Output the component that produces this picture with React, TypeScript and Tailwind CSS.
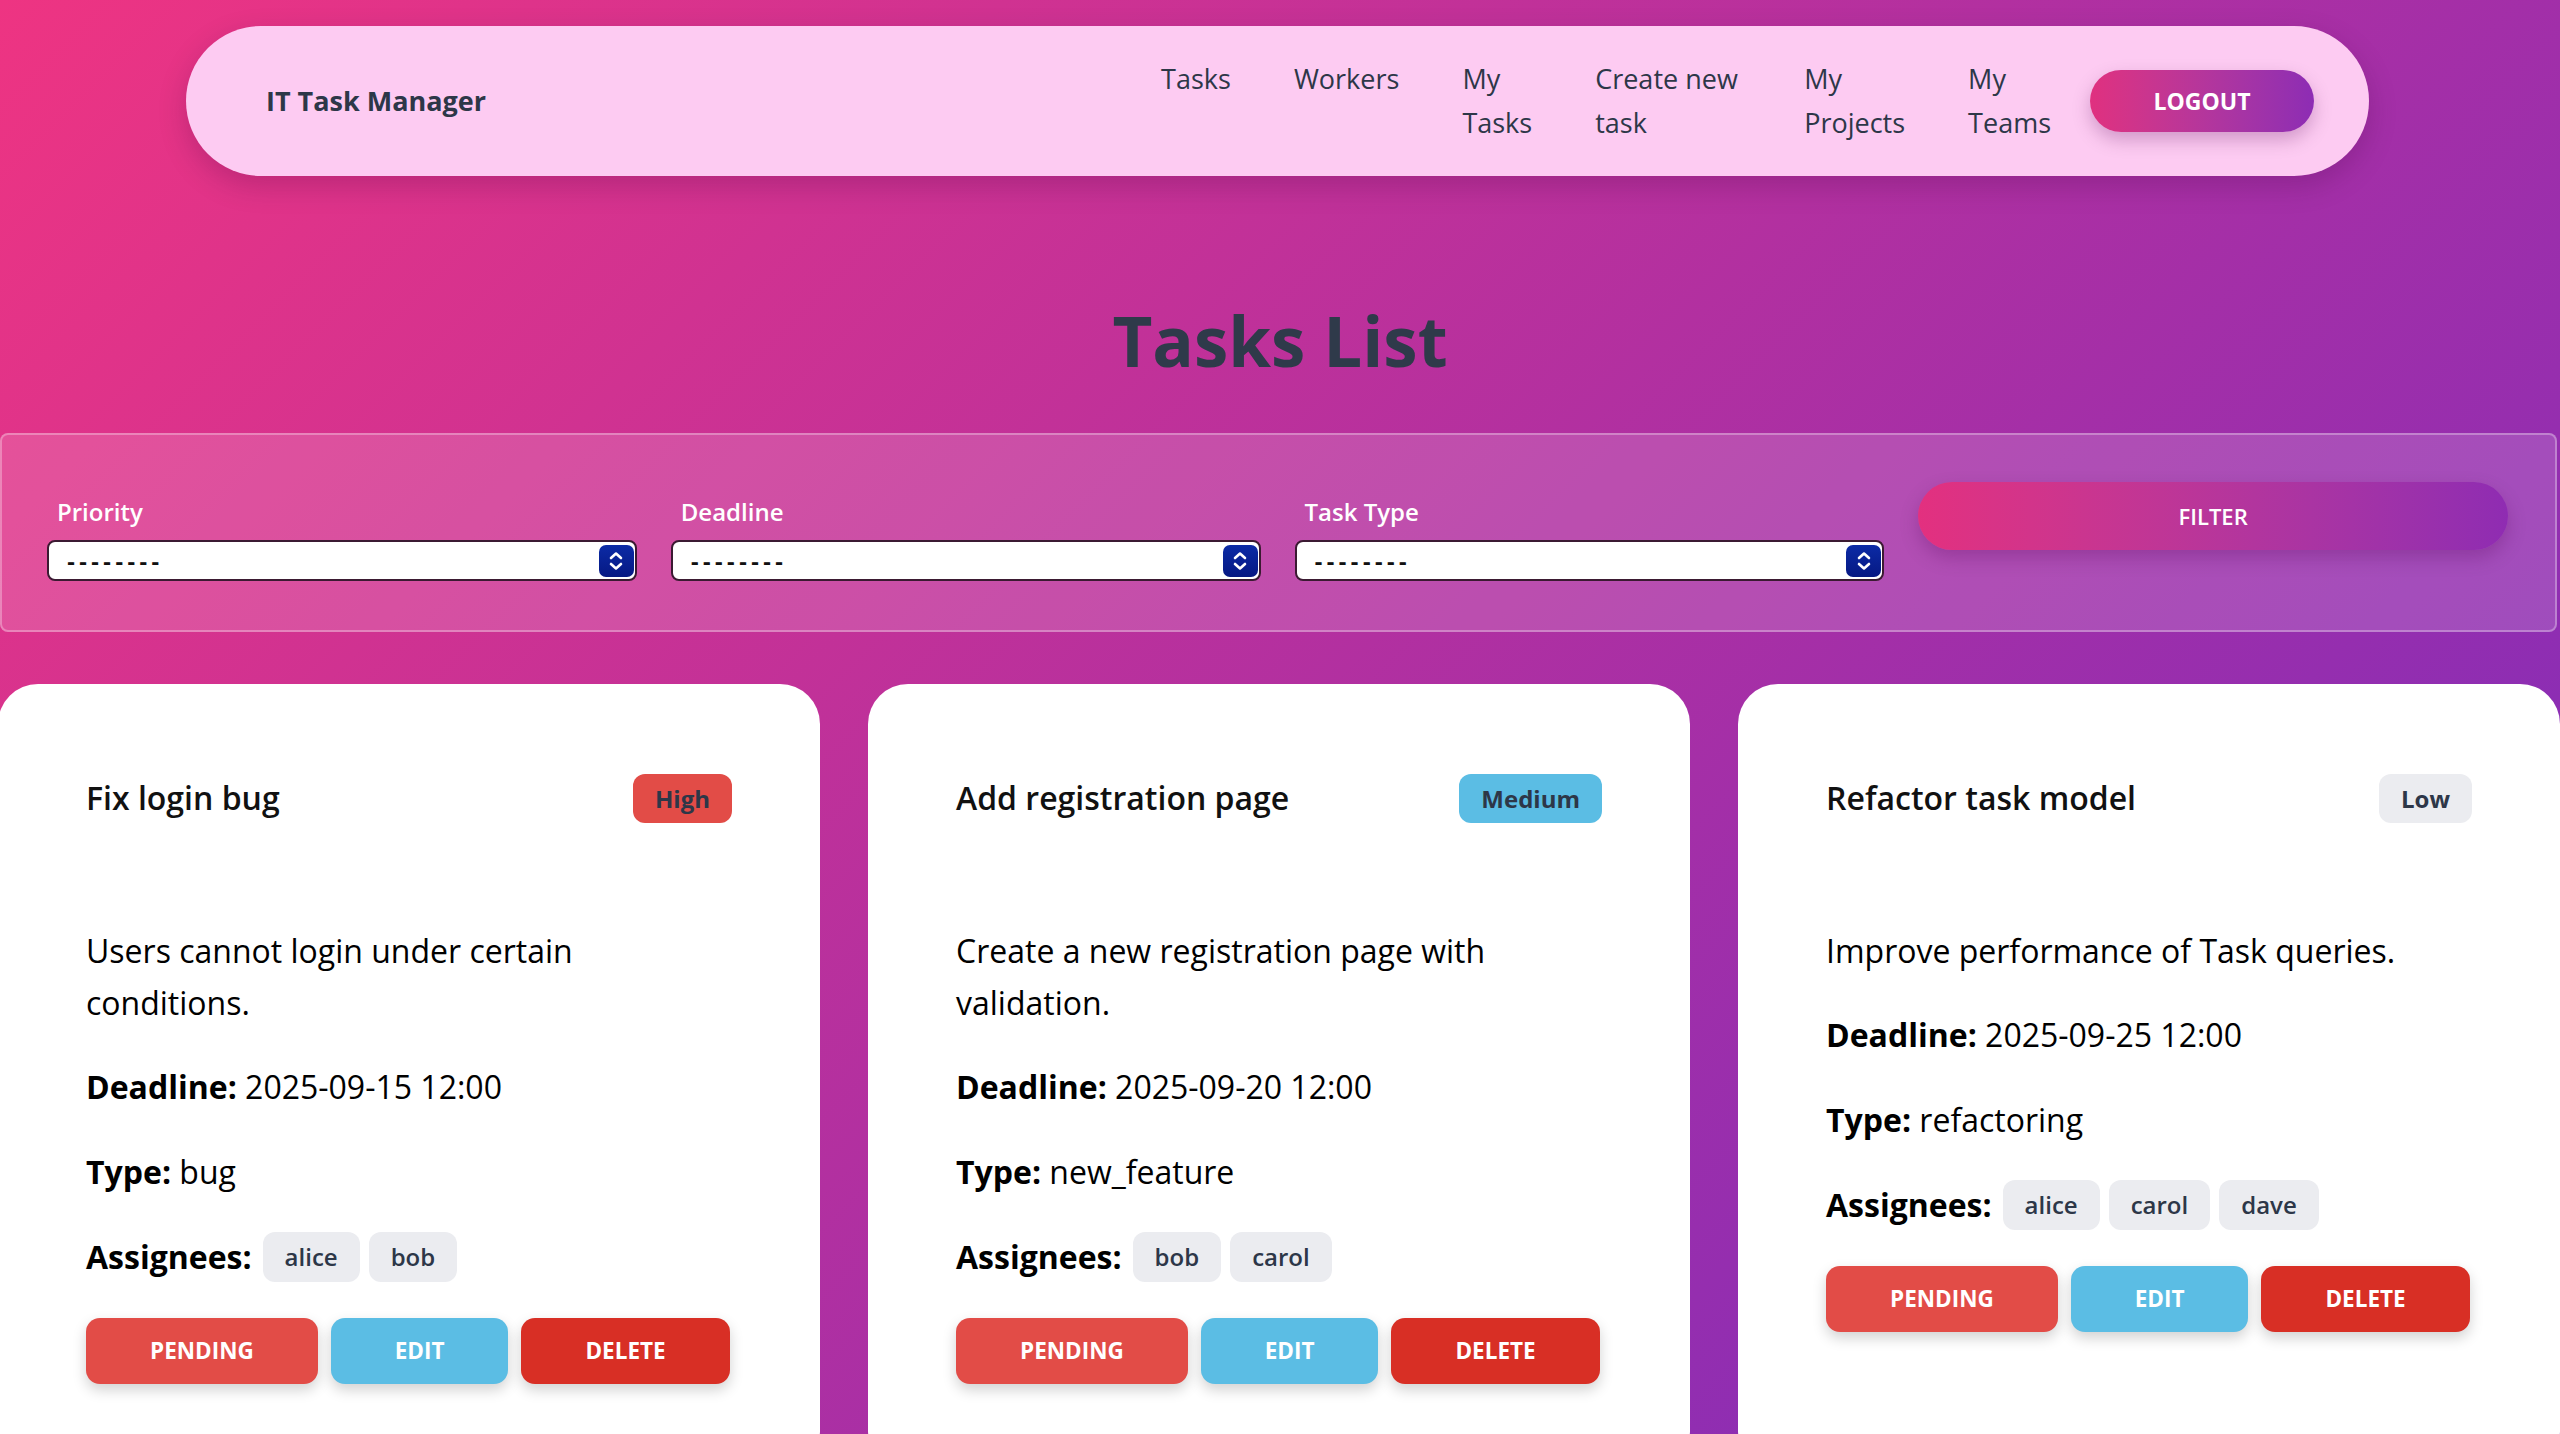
import React from 'react';

type Task = {
  id: number;
  title: string;
  priority: 'High' | 'Medium' | 'Low';
  description: string;
  deadline: string;
  type: string;
  assignees: string[];
};

const tasks: Task[] = [
  {
    id: 1,
    title: 'Fix login bug',
    priority: 'High',
    description: 'Users cannot login under certain conditions.',
    deadline: '2025-09-15 12:00',
    type: 'bug',
    assignees: ['alice', 'bob'],
  },
  {
    id: 2,
    title: 'Add registration page',
    priority: 'Medium',
    description: 'Create a new registration page with validation.',
    deadline: '2025-09-20 12:00',
    type: 'new_feature',
    assignees: ['bob', 'carol'],
  },
  {
    id: 3,
    title: 'Refactor task model',
    priority: 'Low',
    description: 'Improve performance of Task queries.',
    deadline: '2025-09-25 12:00',
    type: 'refactoring',
    assignees: ['alice', 'carol', 'dave'],
  },
];

const priorityClass: Record<Task['priority'], string> = {
  High: 'bg-[#e24c47]',
  Medium: 'bg-[#5bbde4]',
  Low: 'bg-[#ebecf0]',
};

const navLinks = [
  { label: 'Tasks', cls: '' },
  { label: 'Workers', cls: '' },
  { label: 'My Tasks', cls: 'w-min' },
  { label: 'Create new task', cls: 'w-[146px]' },
  { label: 'My Projects', cls: 'w-min' },
  { label: 'My Teams', cls: 'w-min' },
];

const Stepper: React.FC = () => (
  <span className="pointer-events-none absolute right-[3px] top-1/2 -translate-y-1/2 flex h-[32px] w-[35px] items-center justify-center rounded-[7px] bg-gradient-to-b from-[#0c2ba6] to-[#061883]">
    <svg width="16" height="22" viewBox="0 0 16 22" fill="none" stroke="white" strokeWidth="2.6" strokeLinecap="round" strokeLinejoin="round">
      <path d="M3 8 L8 3.5 L13 8" />
      <path d="M3 14 L8 18.5 L13 14" />
    </svg>
  </span>
);

const FilterSelect: React.FC<{ label: string }> = ({ label }) => (
  <div className="pt-[13px]">
    <label className="block pl-[10px] mb-[12px] text-[24px] leading-[33px] font-semibold text-white">{label}</label>
    <div className="relative">
      <select className="appearance-none w-full h-[41px] rounded-[8px] border-2 border-[#3b1a32] bg-white pl-[16px] pt-[3px] text-[20px] font-bold text-[#111] [font-family:'DejaVu_Sans_Mono',monospace] outline-none">
        <option>--------</option>
      </select>
      <Stepper />
    </div>
  </div>
);

const actionBtn =
  'h-[66px] px-16 rounded-[14px] text-white text-[22.5px] font-bold uppercase shadow-[0_6px_14px_rgba(0,0,0,0.18)]';

const TaskCard: React.FC<{ task: Task }> = ({ task }) => (
  <div className="bg-white rounded-[40px] px-[88px] pt-[88px] pb-[88px] text-[32px] leading-[52px] text-black">
    <div className="flex items-center justify-between h-[52px]">
      <h3 className="font-semibold text-[#111]">{task.title}</h3>
      <span className={`${priorityClass[task.priority]} rounded-xl px-[22px] py-2 text-[24px] leading-[33px] font-bold text-[#2d3748]`}>
        {task.priority}
      </span>
    </div>
    <p className="mt-[101px]">{task.description}</p>
    <p className="mt-[32px]">
      <span className="font-bold">Deadline:</span> {task.deadline}
    </p>
    <p className="mt-[33px]">
      <span className="font-bold">Type:</span> {task.type}
    </p>
    <div className="mt-[33px] flex items-center h-[52px]">
      <span className="font-bold mr-[11px]">Assignees:</span>
      <div className="flex gap-[9px]">
        {task.assignees.map((a) => (
          <span key={a} className="bg-[#ebecf0] rounded-xl px-[22px] py-2 text-[24px] leading-[34px] font-semibold text-[#2d3748]">
            {a}
          </span>
        ))}
      </div>
    </div>
    <div className="mt-[35px] flex gap-[13px]">
      <button className={`${actionBtn} bg-[#e24c47]`}>Pending</button>
      <button className={`${actionBtn} bg-[#5bbde4]`}>Edit</button>
      <button className={`${actionBtn} bg-[#d82f25]`}>Delete</button>
    </div>
  </div>
);

export default function App() {
  return (
    <div className="min-h-screen overflow-x-hidden bg-fixed bg-[linear-gradient(135deg,#ee3482_0%,#772cbe_100%)] pt-[26px] pb-[60px] [font-family:'Open_Sans',sans-serif]">
      <nav className="ml-[186px] mr-[191px] h-[150px] rounded-full bg-[#fdcbf2] pl-[80px] pr-[55px] flex items-center justify-between shadow-[0_10px_28px_rgba(60,0,60,0.22)]">
        <span className="text-[27px] font-bold text-[#2d3748]">IT Task Manager</span>
        <div className="flex items-center">
          <ul className="flex items-start gap-[63px]">
            {navLinks.map((l) => (
              <li key={l.label} className={`${l.cls} text-[27px] leading-[44px] text-[#2d3748]`}>
                {l.label}
              </li>
            ))}
          </ul>
          <button className="ml-[39px] h-[62px] w-[224px] rounded-full bg-gradient-to-r from-[#e0307f] to-[#8d2cb4] text-white text-[23px] font-bold shadow-[0_8px_18px_rgba(80,0,80,0.25)]">
            LOGOUT
          </button>
        </div>
      </nav>

      <h1 className="mt-[118px] text-center text-[69px] leading-[92px] font-bold text-[#2f3a4a]">Tasks List</h1>

      <form className="mt-[47px] mr-[3px] rounded-[8px] border-2 border-white/30 bg-white/15 pl-[45px] pr-[47px] pt-[47px] pb-[49px] grid grid-cols-4 gap-[34px] items-start">
        <FilterSelect label="Priority" />
        <FilterSelect label="Deadline" />
        <FilterSelect label="Task Type" />
        <button
          type="button"
          className="h-[68px] w-full rounded-full bg-gradient-to-r from-[#e3307f] to-[#8f2cb2] text-white text-[22px] font-semibold shadow-[0_8px_18px_rgba(80,0,80,0.25)]"
        >
          FILTER
        </button>
      </form>

      <div className="mt-[52px] -ml-[2px] grid grid-cols-3 gap-[48px]">
        {tasks.map((t) => (
          <TaskCard key={t.id} task={t} />
        ))}
      </div>
    </div>
  );
}
